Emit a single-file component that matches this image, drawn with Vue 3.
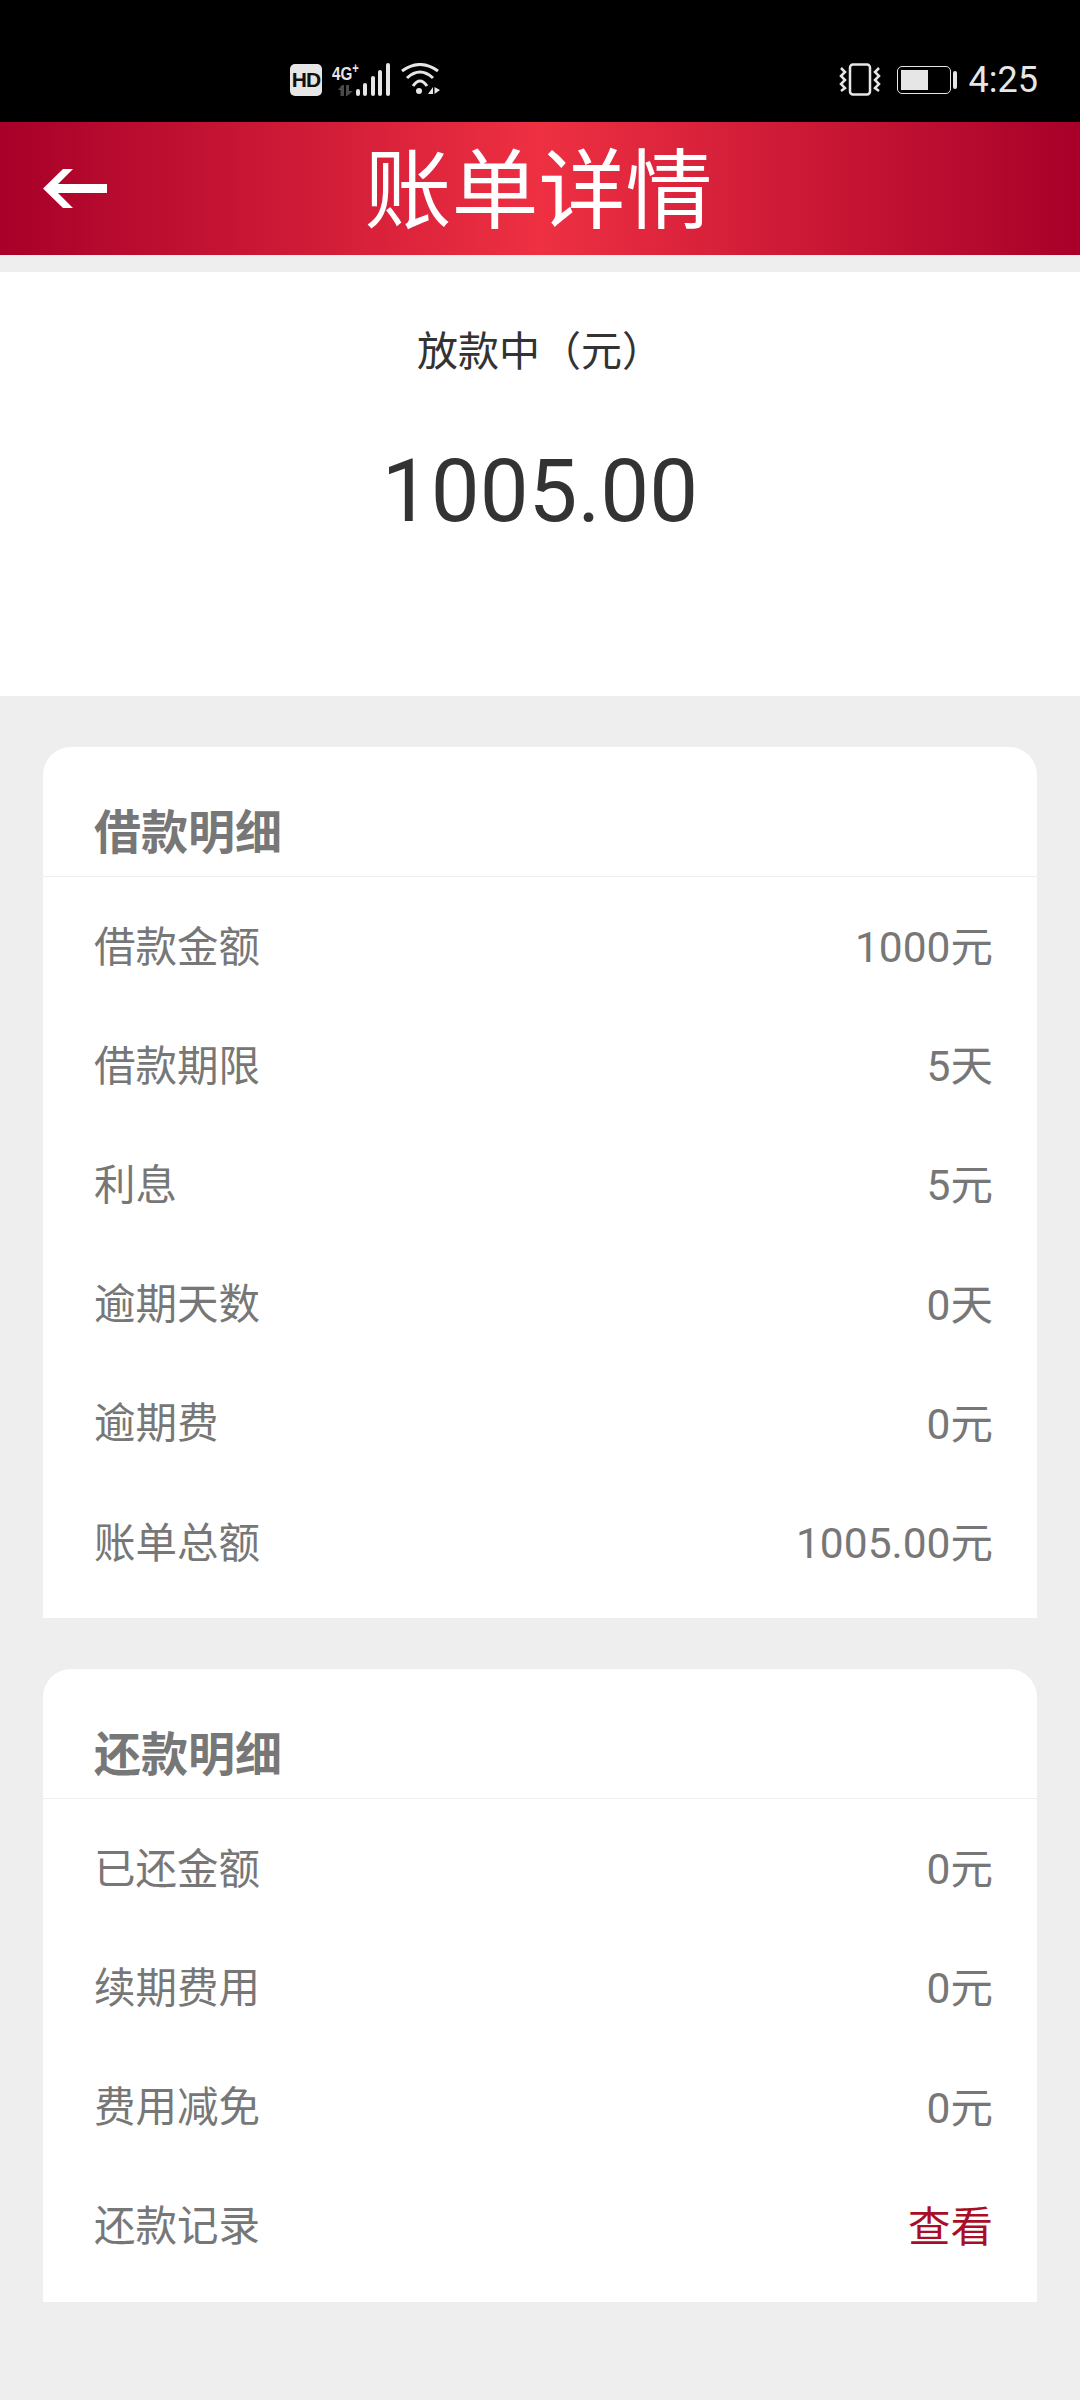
<template>
  <div class="page">
    <div class="status-bar">
      <div class="status-left">
        <span class="hd">HD</span>
        <div class="net">
          <span class="net-label">4G<sup>+</sup></span>
          <svg width="15" height="11" viewBox="0 0 15 11">
            <path d="M4 0 L0 5 H2.500 V11 H6 V0 Z M8 0 H11 V6 H15 L9 11 H8 Z" fill="#4a4a4a" />
          </svg>
        </div>
        <svg class="bars" width="34" height="33" viewBox="0 0 34 33">
          <rect x="0" y="26" width="4" height="7" rx="2" />
          <rect x="7" y="20" width="4" height="13" rx="2" />
          <rect x="15" y="13" width="4" height="20" rx="2" />
          <rect x="22" y="7" width="4" height="26" rx="2" />
          <rect x="30" y="0" width="4" height="33" rx="2" />
        </svg>
        <svg class="wifi" width="39" height="33" viewBox="0 0 39 33">
          <g fill="none" stroke="#e6e6e6" stroke-width="3">
            <path d="M1 8 Q19 -5 37 8" />
            <path d="M6 15 Q19 3 32 15" />
            <path d="M12 23 Q19 13 26 23" />
          </g>
          <circle cx="18" cy="28" r="3" fill="#e6e6e6" />
          <path d="M32 24 V31 H27 Z M33.500 24 L39 27 L33.500 31 Z" fill="#e6e6e6" />
        </svg>
      </div>
      <div class="status-right">
        <svg width="42" height="33" viewBox="0 0 42 33">
          <rect x="11" y="1.500" width="20" height="30" rx="3" fill="none" stroke="#e6e6e6" stroke-width="2.500" />
          <g fill="none" stroke="#e6e6e6" stroke-width="2.500">
            <path d="M2 5 L6 9 L2 13 L6 17 L2 21 L6 25 L2 28" />
            <path d="M40 5 L36 9 L40 13 L36 17 L40 21 L36 25 L40 28" />
          </g>
        </svg>
        <div class="battery">
          <div class="battery-body"><div class="battery-level"></div></div>
          <div class="battery-cap"></div>
        </div>
        <span class="time">4:25</span>
      </div>
    </div>

    <header class="nav">
      <svg class="back" width="64" height="39" viewBox="0 0 64 39">
        <path d="M30 0 H20 L0 19.500 L20 39 H30 L15 24 H64 V15 H15 Z" fill="#fff" />
      </svg>
      <h1 class="nav-title">账单详情</h1>
    </header>

    <section class="summary">
      <p class="summary-label">放款中（元）</p>
      <p class="summary-amount">1005.00</p>
    </section>

    <section v-for="card in cards" :key="card.title" class="card">
      <div class="card-title">{{ card.title }}</div>
      <div class="card-rows">
        <div v-for="row in card.rows" :key="row.label" class="row">
          <span class="row-label">{{ row.label }}</span>
          <span class="row-value" :class="{ link: row.link }">{{ row.value }}</span>
        </div>
      </div>
    </section>
  </div>
</template>

<script setup>
const cards = [
  {
    title: '借款明细',
    rows: [
      { label: '借款金额', value: '1000元' },
      { label: '借款期限', value: '5天' },
      { label: '利息', value: '5元' },
      { label: '逾期天数', value: '0天' },
      { label: '逾期费', value: '0元' },
      { label: '账单总额', value: '1005.00元' }
    ]
  },
  {
    title: '还款明细',
    rows: [
      { label: '已还金额', value: '0元' },
      { label: '续期费用', value: '0元' },
      { label: '费用减免', value: '0元' },
      { label: '还款记录', value: '查看', link: true }
    ]
  }
]
</script>

<style scoped>
.page {
  width: 1080px;
  height: 2400px;
  overflow: hidden;
  background: #eeeeee;
  font-family: Roboto, "Noto Sans CJK SC", sans-serif;
}

/* 状态栏 */
.status-bar {
  display: flex;
  align-items: flex-end;
  justify-content: space-between;
  box-sizing: border-box;
  height: 122px;
  padding: 0 42px 26px 290px;
  background: #000;
  color: #e6e6e6;
}
.status-left,
.status-right {
  display: flex;
  align-items: flex-end;
}
.hd {
  width: 32px;
  height: 32px;
  border-radius: 5px;
  background: #e6e6e6;
  color: #111;
  font: 700 21px/32px "Liberation Sans", sans-serif;
  text-align: center;
  letter-spacing: -1px;
}
.net {
  display: flex;
  flex-direction: column;
  width: 24px;
  margin-left: 10px;
}
.net-label {
  height: 19px;
  font: 700 19px/19px "Liberation Sans", sans-serif;
  transform: scaleX(0.8);
  transform-origin: left;
  white-space: nowrap;
}
.net-label sup {
  font-size: 14px;
  line-height: 0;
}
.net svg {
  margin: 2px 0 0 6px;
}
.bars {
  fill: #e6e6e6;
}
.wifi {
  margin-left: 11px;
}
.battery {
  display: flex;
  align-items: center;
  margin-left: 16px;
  margin-bottom: 2px;
}
.battery-body {
  box-sizing: border-box;
  width: 54px;
  height: 28px;
  padding: 3px;
  border: 1px solid #e6e6e6;
  border-radius: 5px;
}
.battery-level {
  width: 27px;
  height: 100%;
  background: #e6e6e6;
}
.battery-cap {
  width: 4px;
  height: 18px;
  margin-left: 2px;
  border-radius: 2px;
  background: #e6e6e6;
}
.time {
  margin-left: 12px;
  font-size: 36px;
  line-height: 32px;
}

/* 标题栏 */
.nav {
  position: relative;
  display: flex;
  align-items: center;
  justify-content: center;
  box-sizing: border-box;
  height: 133px;
  padding: 8px 3px 0 0;
  background: linear-gradient(90deg, #a80029 0%, #ee3042 50%, #a80029 100%);
}
.back {
  position: absolute;
  left: 43px;
  top: 47px;
}
.nav-title {
  margin: 0;
  color: #fff;
  font-size: 87px;
  font-weight: 400;
  line-height: 1;
}

/* 金额 */
.summary {
  display: flex;
  flex-direction: column;
  align-items: center;
  box-sizing: border-box;
  height: 424px;
  margin: 17px 0 1px;
  padding-top: 53px;
  background: #fff;
}
.summary-label {
  margin: 0;
  color: #333;
  font-size: 41px;
  line-height: 54px;
}
.summary-amount {
  margin: 62px 0 0;
  color: #333;
  font-size: 87px;
  line-height: 100px;
}

/* 明细卡片 */
.card {
  width: 994px;
  margin: 51px 0 0 43px;
  border-radius: 28px 28px 0 0;
  background: #fff;
}
.card-title {
  box-sizing: border-box;
  height: 130px;
  padding: 51px 51px 0;
  border-bottom: 1px solid #eeeeee;
  color: #777;
  font-size: 47px;
  font-weight: 700;
  line-height: 70px;
}
.card-rows {
  padding: 7px 44px 19px 51px;
}
.row {
  display: flex;
  align-items: center;
  justify-content: space-between;
  height: 119.200px;
  color: #777;
}
.row-label {
  font-size: 41.500px;
}
.row-value {
  font-size: 42.500px;
}
.link {
  color: #a80e25;
}
</style>

<style>
html,
body {
  background: #eeeeee;
}
</style>
